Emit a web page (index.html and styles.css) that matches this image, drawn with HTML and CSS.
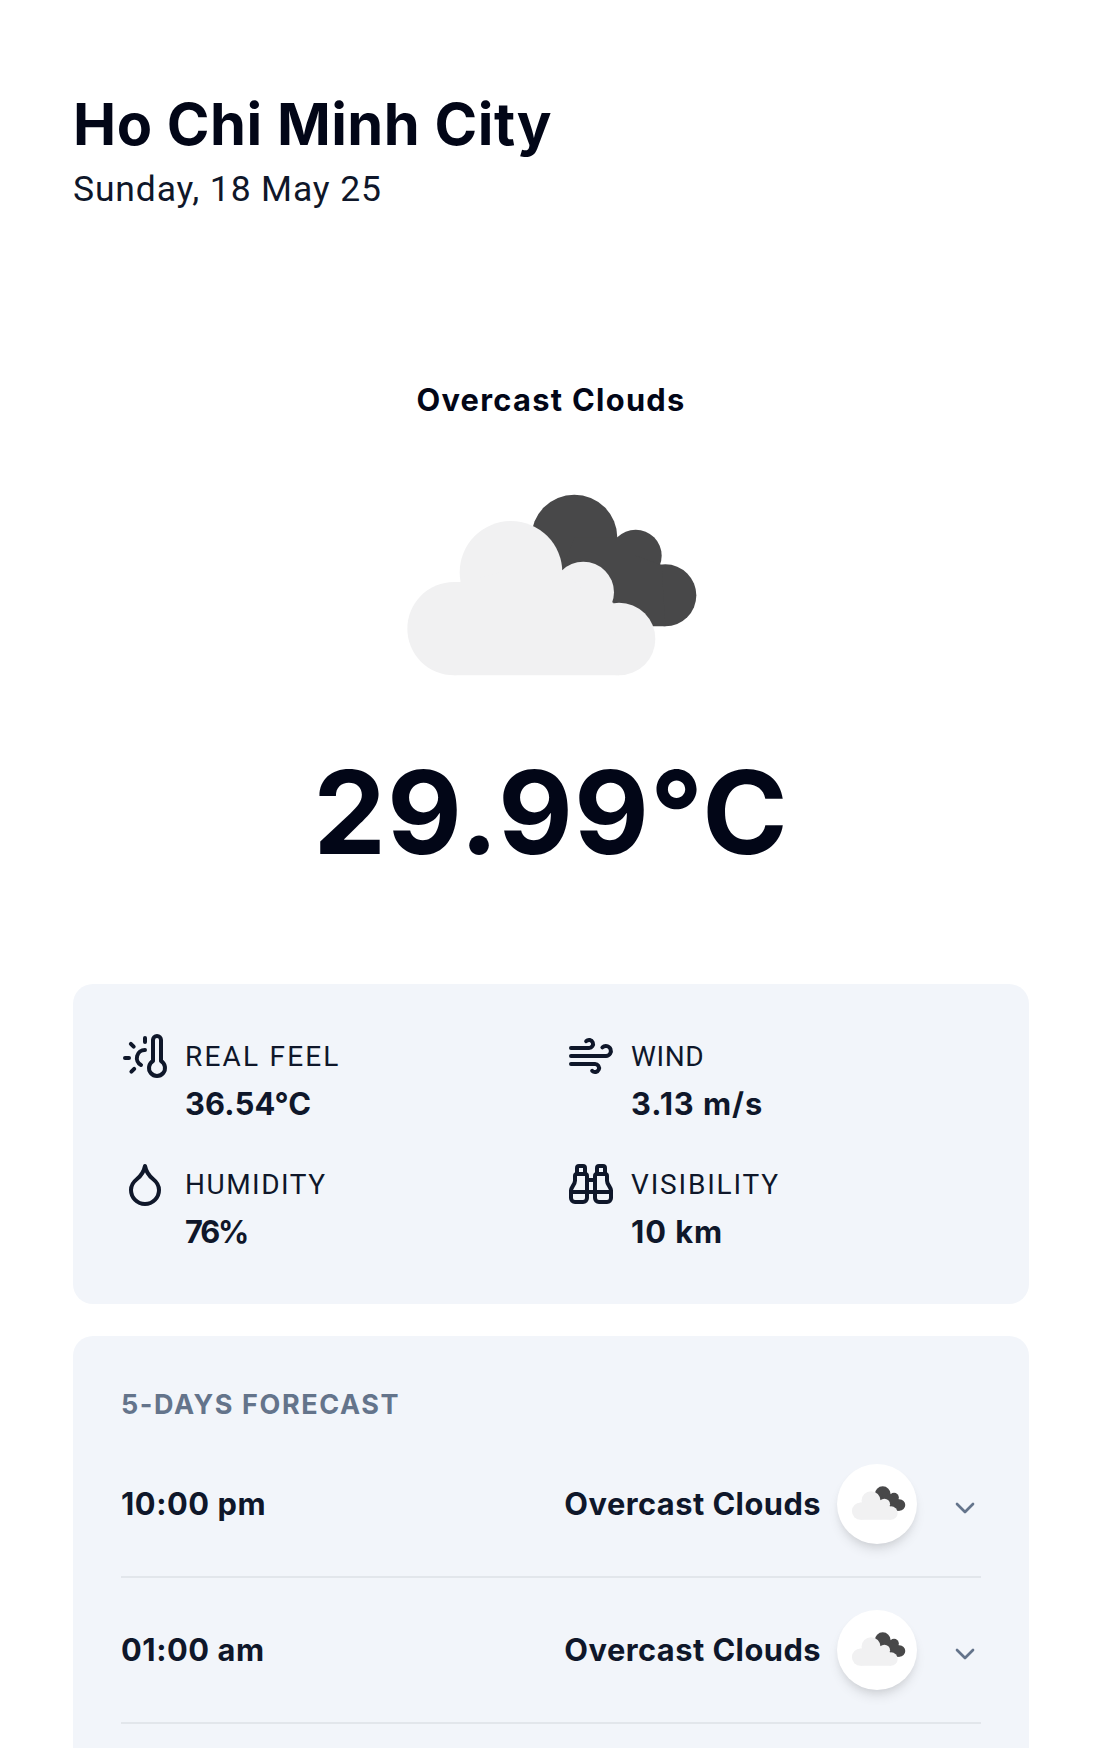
FILE: index.html
```
<!DOCTYPE html>
<html lang="en">
<head>
<meta charset="utf-8">
<title>Weather – Ho Chi Minh City</title>
<link rel="stylesheet" href="styles.css">
</head>
<body>
<svg class="defs" aria-hidden="true">
  <symbol id="clouds" overflow="visible">
    <g fill="#484849">
      <circle cx="583" cy="503" r="129"/>
      <circle cx="767" cy="557" r="78"/>
      <circle cx="856" cy="676" r="93"/>
      <path d="M583 503H712L767 557L845 585L856 769H717L547 600Z"/>
    </g>
    <g fill="#f1f1f2">
      <circle cx="393" cy="607" r="154"/>
      <circle cx="222" cy="776" r="140"/>
      <circle cx="610" cy="667" r="92"/>
      <circle cx="717" cy="807" r="109"/>
      <path d="M222 636H239L393 600H546L610 660L700 698L717 916H222Z"/>
    </g>
  </symbol>
  <symbol id="chevron" viewBox="0 0 24 24"><path d="m6 9 6 6 6-6"/></symbol>
</svg>
<main class="page">
  <header>
    <h1 class="city">Ho Chi Minh City</h1>
    <p class="date">Sunday, 18 May 25</p>
  </header>

  <section class="current">
    <p class="condition">Overcast Clouds</p>
    <svg class="current-icon" viewBox="-87 162 1200 981"><use href="#clouds"/></svg>
    <p class="temperature">29.99°C</p>
  </section>

  <section class="card stats">
    <div class="stat">
      <svg class="icon" viewBox="0 0 24 24"><path d="M12 9a4 4 0 0 0-2 7.5"/><path d="M12 3v2"/><path d="m6.6 18.4-1.4 1.4"/><path d="M20 4v10.54a4 4 0 1 1-4 0V4a2 2 0 0 1 4 0Z"/><path d="M4 13H2"/><path d="M6.34 7.34 4.93 5.93"/></svg>
      <div><p class="label real-feel">REAL FEEL</p><p class="value degrees">36.54°C</p></div>
    </div>
    <div class="stat">
      <svg class="icon" viewBox="0 0 24 24"><path d="M17.7 7.7a2.5 2.5 0 1 1 1.8 4.3H2"/><path d="M9.6 4.6A2 2 0 1 1 11 8H2"/><path d="M12.6 19.4A2 2 0 1 0 14 16H2"/></svg>
      <div><p class="label wind">WIND</p><p class="value">3.13 m/s</p></div>
    </div>
    <div class="stat">
      <svg class="icon" viewBox="0 0 24 24"><path d="M12 22a7 7 0 0 0 7-7c0-2-1-3.9-3-5.5s-3.5-4-4-6.5c-.5 2.5-2 4.9-4 6.5C6 11.1 5 13 5 15a7 7 0 0 0 7 7z"/></svg>
      <div><p class="label">HUMIDITY</p><p class="value percent">76%</p></div>
    </div>
    <div class="stat">
      <svg class="icon" viewBox="0 0 24 24"><path d="M10 10h4"/><path d="M19 7V4a1 1 0 0 0-1-1h-2a1 1 0 0 0-1 1v3"/><path d="M20 21a2 2 0 0 0 2-2v-3.851c0-1.39-2-2.962-2-4.829V8a1 1 0 0 0-1-1h-4a1 1 0 0 0-1 1v11a2 2 0 0 0 2 2z"/><path d="M22 16H2"/><path d="M4 21a2 2 0 0 1-2-2v-3.851c0-1.39 2-2.962 2-4.829V8a1 1 0 0 1 1-1h4a1 1 0 0 1 1 1v11a2 2 0 0 1-2 2z"/><path d="M9 7V4a1 1 0 0 0-1-1H6a1 1 0 0 0-1 1v3"/></svg>
      <div><p class="label visibility">VISIBILITY</p><p class="value">10 km</p></div>
    </div>
  </section>

  <section class="card">
    <h2 class="heading">5-DAYS FORECAST</h2>
    <div class="row">
      <span class="time">10:00 pm</span>
      <span class="summary">Overcast Clouds</span>
      <span class="badge"><svg viewBox="-160 11 1300 1300"><use href="#clouds"/></svg></span>
      <svg class="chevron"><use href="#chevron"/></svg>
    </div>
    <div class="row">
      <span class="time">01:00 am</span>
      <span class="summary">Overcast Clouds</span>
      <span class="badge"><svg viewBox="-160 11 1300 1300"><use href="#clouds"/></svg></span>
      <svg class="chevron"><use href="#chevron"/></svg>
    </div>
  </section>
</main>
</body>
</html>
```
FILE: styles.css
```
* { box-sizing: border-box; margin: 0; }
html { height: 100%; overflow: hidden; }
body {
  height: 100%;
  overflow: hidden;
  background: #fff;
  color: #0f172a;
  font: 700 30.8px/48px Inter, "Liberation Sans", sans-serif;
}
svg { display: block; flex: none; }
.defs { width: 0; height: 0; position: absolute; }
.page { padding: 88px 71px 0 73px; }

.city { color: #020617; font-size: 57.75px; font-weight: 700; line-height: 72px; letter-spacing: .52px; }
.date { font: 400 35.5px/58px Roboto, sans-serif; letter-spacing: .85px; }

.current {
  height: 608px;
  margin: 158px 0 0;
  display: flex;
  flex-direction: column;
  align-items: center;
  color: #020617;
}
.condition { letter-spacing: 1.3px; }
.current-icon { width: 400px; height: 327px; }
.temperature { font-size: 115.5px; line-height: 122px; letter-spacing: 1.1px; }

.card { padding: 48px; border-radius: 20px; background: #f2f5fa; }
.stats { display: grid; grid-template-columns: 1fr 1fr; gap: 32px; width: 956px; margin-bottom: 32px; }
.stat { display: flex; gap: 16px; }
.icon { width: 48px; height: 48px; }
.icon, .chevron { fill: none; stroke: currentColor; stroke-width: 2; stroke-linecap: round; stroke-linejoin: round; }
.label { height: 48px; font: 400 28px/50px Roboto, sans-serif; letter-spacing: 1.5px; }
.real-feel { letter-spacing: 2.2px; }
.wind { letter-spacing: .6px; }
.visibility { letter-spacing: 1.8px; }
.value { letter-spacing: .95px; }
.degrees { letter-spacing: .2px; }
.percent { letter-spacing: -2.2px; }

.heading { height: 40px; margin-bottom: 8px; color: #64748b; font-size: 27px; font-weight: 700; line-height: 42px; letter-spacing: 1.57px; }
.row { display: flex; align-items: center; padding: 32px 0; border-bottom: 2px solid #e2e6eb; }
.time { flex: 1; letter-spacing: .55px; }
.summary { margin-right: 16px; letter-spacing: .46px; }
.badge {
  width: 80px;
  height: 80px;
  margin-right: 32px;
  border-radius: 50%;
  background: #fff;
  box-shadow: 0 8px 12px -2px rgb(0 0 0 / .1), 0 4px 8px -4px rgb(0 0 0 / .1);
}
.chevron { width: 32px; height: 32px; margin-top: 8px; color: #64748b; }
```
